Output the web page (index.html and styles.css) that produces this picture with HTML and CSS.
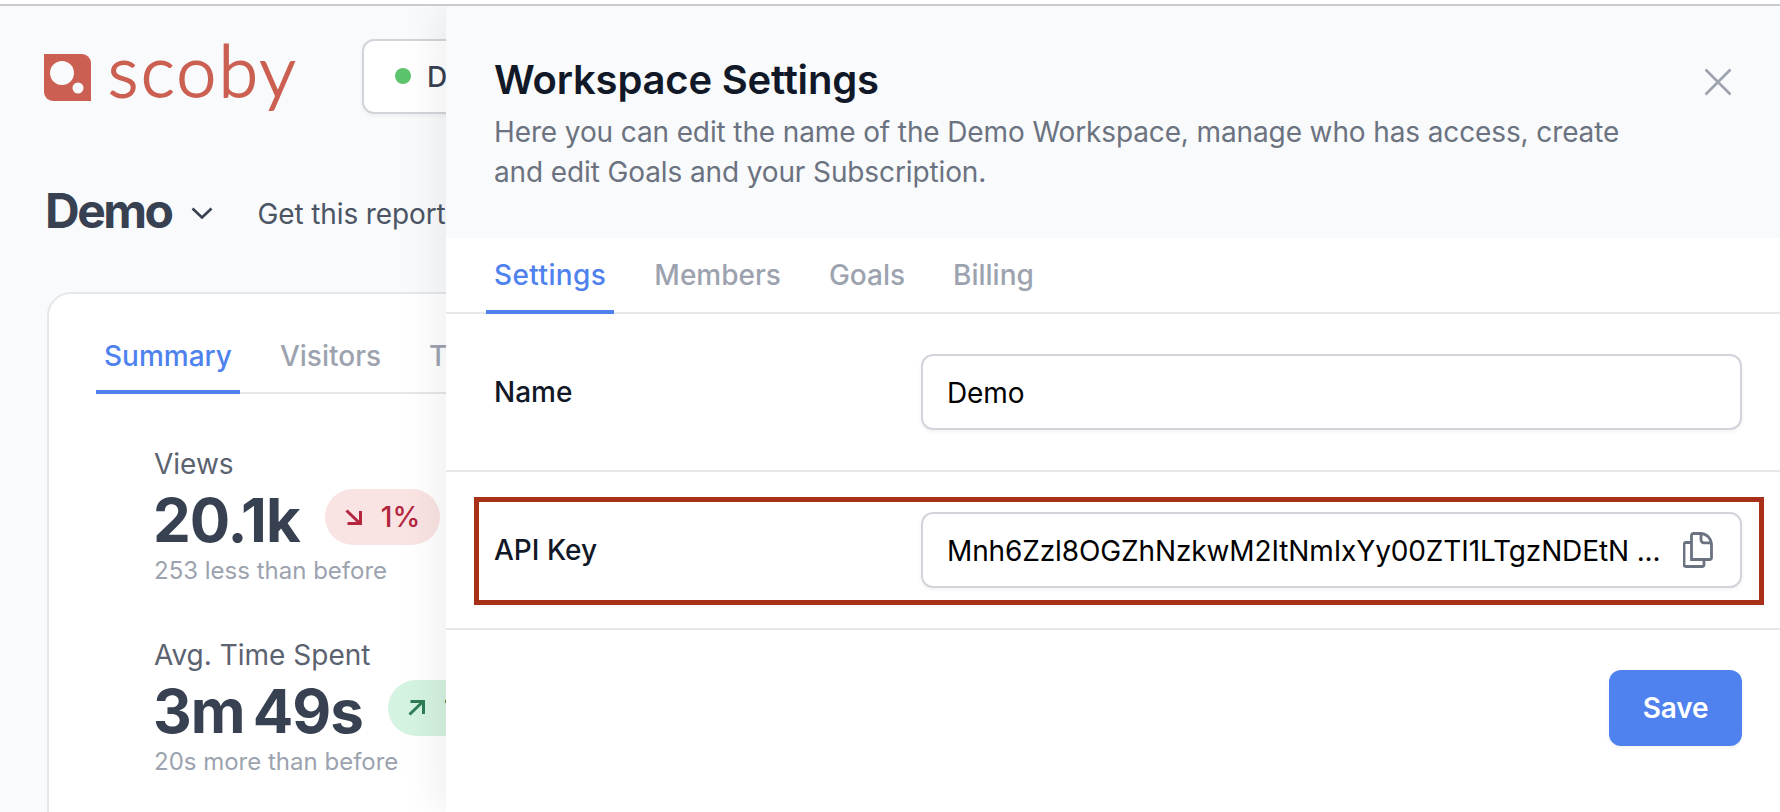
FILE: index.html
```html
<!DOCTYPE html>
<html lang="en">
<head>
<meta charset="utf-8">
<title>Workspace Settings</title>
<link rel="stylesheet" href="styles.css">
</head>
<body>
<div class="chrome-line"></div>
<div class="screen">
  <main class="page">
    <header class="topbar">
      <div class="logo">
        <svg class="logo-mark" viewBox="0 0 47 47" aria-hidden="true">
          <path d="M0 0H38A9 9 0 0 1 47 9V47H9A9 9 0 0 1 0 38Z" fill="#cb6052"/>
          <circle cx="18" cy="19" r="12" fill="#f9fafb"/>
          <circle cx="34" cy="34" r="5.500" fill="#f9fafb"/>
        </svg>
        <span class="logo-word">scoby</span>
      </div>
      <button class="site-select"><span class="dot"></span>D</button>
    </header>
    <div class="title-row">
      <h1 class="page-title">Demo</h1>
      <svg class="chevron" viewBox="0 0 22 12" aria-hidden="true"><path d="M1.500 1.500 11 10.500l9.500-9"/></svg>
      <span class="report-link">Get this report</span>
    </div>
    <section class="card">
      <nav class="tabs card-tabs">
        <span class="tab active">Summary</span>
        <span class="tab">Visitors</span>
        <span class="tab">T</span>
      </nav>
      <div class="stats">
        <div class="stat">
          <div class="stat-label">Views</div>
          <div class="stat-main">
            <span class="stat-value">20.1k</span>
            <span class="badge down">
              <svg viewBox="0 0 17 16" aria-hidden="true"><path d="M1.500 1.500 15 14.500M15.500 2V14.500H2.500"/></svg>
              1%
            </span>
          </div>
          <div class="stat-note">253 less than before</div>
        </div>
        <div class="stat">
          <div class="stat-label">Avg. Time Spent</div>
          <div class="stat-main">
            <span class="stat-value">3m 49s</span>
            <span class="badge up">
              <svg viewBox="0 0 17 16" aria-hidden="true"><path d="M1.500 14.500 15 1.500M2.500 1.500H15.500V14"/></svg>
              1%
            </span>
          </div>
          <div class="stat-note">20s more than before</div>
        </div>
      </div>
    </section>
  </main>

  <aside class="panel">
    <div class="panel-head">
      <div>
        <h2 class="panel-title">Workspace Settings</h2>
        <p class="panel-desc">Here you can edit the name of the Demo Workspace, manage who has access, create and edit Goals and your Subscription.</p>
      </div>
      <svg class="close" viewBox="0 0 28 28" aria-hidden="true"><path d="M1.500 1.500 26.500 26.500M26.500 1.500 1.500 26.500"/></svg>
    </div>
    <nav class="tabs panel-tabs">
      <span class="tab active">Settings</span>
      <span class="tab">Members</span>
      <span class="tab">Goals</span>
      <span class="tab">Billing</span>
    </nav>
    <div class="row">
      <label class="row-label">Name</label>
      <div class="field"><span class="field-text">Demo</span></div>
    </div>
    <div class="row highlighted">
      <label class="row-label">API Key</label>
      <div class="field">
        <span class="field-text">Mnh6Zzl8OGZhNzkwM2ItNmIxYy00ZTI1LTgzNDEtN ...</span>
        <svg class="copy" viewBox="0 0 30 36" aria-hidden="true"><path d="M8.500 27.500V3.500a2 2 0 0 1 2-2H17c7 0 11.500 5 11.500 12V25.500a2 2 0 0 1-2 2Z"/><path d="M18 1.800v6a3 3 0 0 0 3 3h7.500"/><path d="M8.500 10.500H3a2 2 0 0 0-2 2V32.500a2 2 0 0 0 2 2H19a2 2 0 0 0 2-2v-5"/></svg>
      </div>
      <div class="annotation"></div>
    </div>
    <div class="panel-foot"><button class="save">Save</button></div>
  </aside>
</div>
</body>
</html>
```

FILE: styles.css
```css
* { box-sizing: border-box; }
html, body { margin: 0; height: 100%; }
body {
  background: #fff;
  font-family: Inter, "Liberation Sans", sans-serif;
  overflow: hidden;
  padding-top: 4px;
}
h1, h2, p { margin: 0; }
button { font: inherit; }

.chrome-line { height: 2px; background: #c9cad0; }
.screen { position: relative; height: 806px; overflow: hidden; background: #f9fafb; }

.page { width: 446px; height: 806px; overflow: hidden; padding: 32px 0 0 44px; }
.topbar { display: flex; align-items: center; height: 76px; }
.logo { display: flex; align-items: center; flex: none; width: 318px; }
.logo-mark { width: 47px; height: 47px; flex: none; margin-top: 2px; }
.logo-word {
  margin: -13px 0 0 17px;
  font-family: Lato, sans-serif;
  font-weight: 300;
  font-size: 71px;
  line-height: 76px;
  letter-spacing: 2.700px;
  color: #cb6052;
  -webkit-text-stroke: 1.800px #cb6052;
}
.site-select {
  display: flex;
  align-items: center;
  flex: none;
  width: 300px;
  height: 75px;
  padding: 2px 0 0 31px;
  border: 2px solid #d1d5db;
  border-radius: 12px;
  background: #fff;
  font-size: 28px;
  font-weight: 500;
  color: #374151;
  box-shadow: 0 2px 4px rgba(0, 0, 0, .05);
}
.dot { width: 16px; height: 16px; margin: -2px 16px 0 0; border-radius: 50%; background: #5cc46c; }

.title-row { display: flex; align-items: center; height: 56px; margin-top: 69px; padding-left: 1px; }
.page-title { font-size: 48px; line-height: 56px; font-weight: 700; color: #374151; letter-spacing: -2.500px; }
.chevron { width: 22px; height: 12px; flex: none; margin: 4px 0 0 19px; fill: none; stroke: #374151; stroke-width: 2.600; }
.report-link { margin: 5px 0 0 45px; font-size: 28px; color: #4b5563; white-space: nowrap; letter-spacing: -.120px; }

.card {
  width: 1300px;
  height: 600px;
  margin: 53px 0 0 3px;
  padding-top: 26px;
  border: 2px solid #e5e7eb;
  border-radius: 24px;
  background: #fff;
}

.tabs { display: flex; gap: 32px; border-bottom: 2px solid #e5e7eb; }
.tab {
  padding: 17px 8px 15px;
  margin-bottom: -2px;
  border-bottom: 4px solid transparent;
  font-size: 28px;
  line-height: 40px;
  font-weight: 500;
  color: #9ca3af;
}
.tab.active { color: #4f82ee; border-bottom-color: #4f82ee; }
.panel-tabs .active { letter-spacing: .400px; }
.card-tabs { margin-left: 47px; width: 1200px; }
.card-tabs .tab { padding: 16px 8px 14px; }

.stats { display: flex; flex-direction: column; gap: 48px; padding: 50px 0 0 105px; }
.stat-label { font-size: 28px; line-height: 40px; color: #5b6270; }
.stat-main { display: flex; align-items: center; gap: 25px; height: 66px; }
.stat-value { margin-left: -1px; padding-top: 7px; font-size: 60px; line-height: 61px; font-weight: 700; color: #374151; letter-spacing: -1px; word-spacing: -5px; }
.stat-note { margin-top: 5px; font-size: 24px; line-height: 32px; color: #9ca3af; }
.badge {
  display: inline-flex;
  align-items: center;
  gap: 19px;
  height: 56px;
  padding: 0 20px;
  border-radius: 28px;
  font-size: 28px;
  font-weight: 500;
  white-space: nowrap;
}
.badge svg { width: 17px; height: 16px; flex: none; fill: none; stroke: currentColor; stroke-width: 3; }
.badge.down { background: #f9e3e3; color: #b3263e; }
.badge.up { background: #d5f3e1; color: #2e7d55; }

.panel {
  position: absolute;
  top: 0;
  right: 0;
  bottom: 0;
  left: 446px;
  background: #fff;
  box-shadow: -12px 0 36px rgba(0, 0, 0, .06);
}
.panel-head {
  display: flex;
  justify-content: space-between;
  height: 232px;
  padding: 48px;
  background: #f9fafb;
}
.panel-title { font-size: 40px; line-height: 52px; font-weight: 600; color: #111827; letter-spacing: -.200px; }
.panel-desc { width: 1150px; margin-top: 6px; font-size: 28px; line-height: 40px; color: #6b7280; letter-spacing: -.120px; }
.close { width: 28px; height: 28px; margin-top: 14px; fill: none; stroke: #9ca3af; stroke-width: 2.600; flex: none; }

.panel-tabs { padding-left: 40px; }

.row {
  position: relative;
  display: grid;
  grid-template-columns: 427px 821px;
  align-items: center;
  height: 158px;
  padding-left: 48px;
  border-bottom: 2px solid #e5e7eb;
}
.row-label { font-size: 28px; font-weight: 500; line-height: 40px; color: #111827; }
.field {
  display: flex;
  align-items: center;
  justify-content: space-between;
  height: 76px;
  padding: 0 27px 0 24px;
  border: 2px solid #d1d5db;
  border-radius: 12px;
  background: #fff;
  box-shadow: 0 2px 4px rgba(0, 0, 0, .05);
}
.field-text { padding-top: 2px; font-size: 28px; color: #000; white-space: nowrap; letter-spacing: -.120px; }
.copy { width: 30px; height: 36px; flex: none; fill: none; stroke: #6b7280; stroke-width: 2.800; }
.annotation {
  position: absolute;
  top: 25px;
  left: 28px;
  right: 16px;
  height: 108px;
  border: 5px solid #a82f18;
  pointer-events: none;
}

.panel-foot { display: flex; justify-content: flex-end; padding: 40px 38px 0 0; }
.save {
  width: 133px;
  height: 76px;
  border: 0;
  border-radius: 12px;
  background: #4f82ee;
  color: #fff;
  font-size: 28px;
  font-weight: 600;
  letter-spacing: -.200px;
  box-shadow: 0 2px 4px rgba(0, 0, 0, .05);
}
```
